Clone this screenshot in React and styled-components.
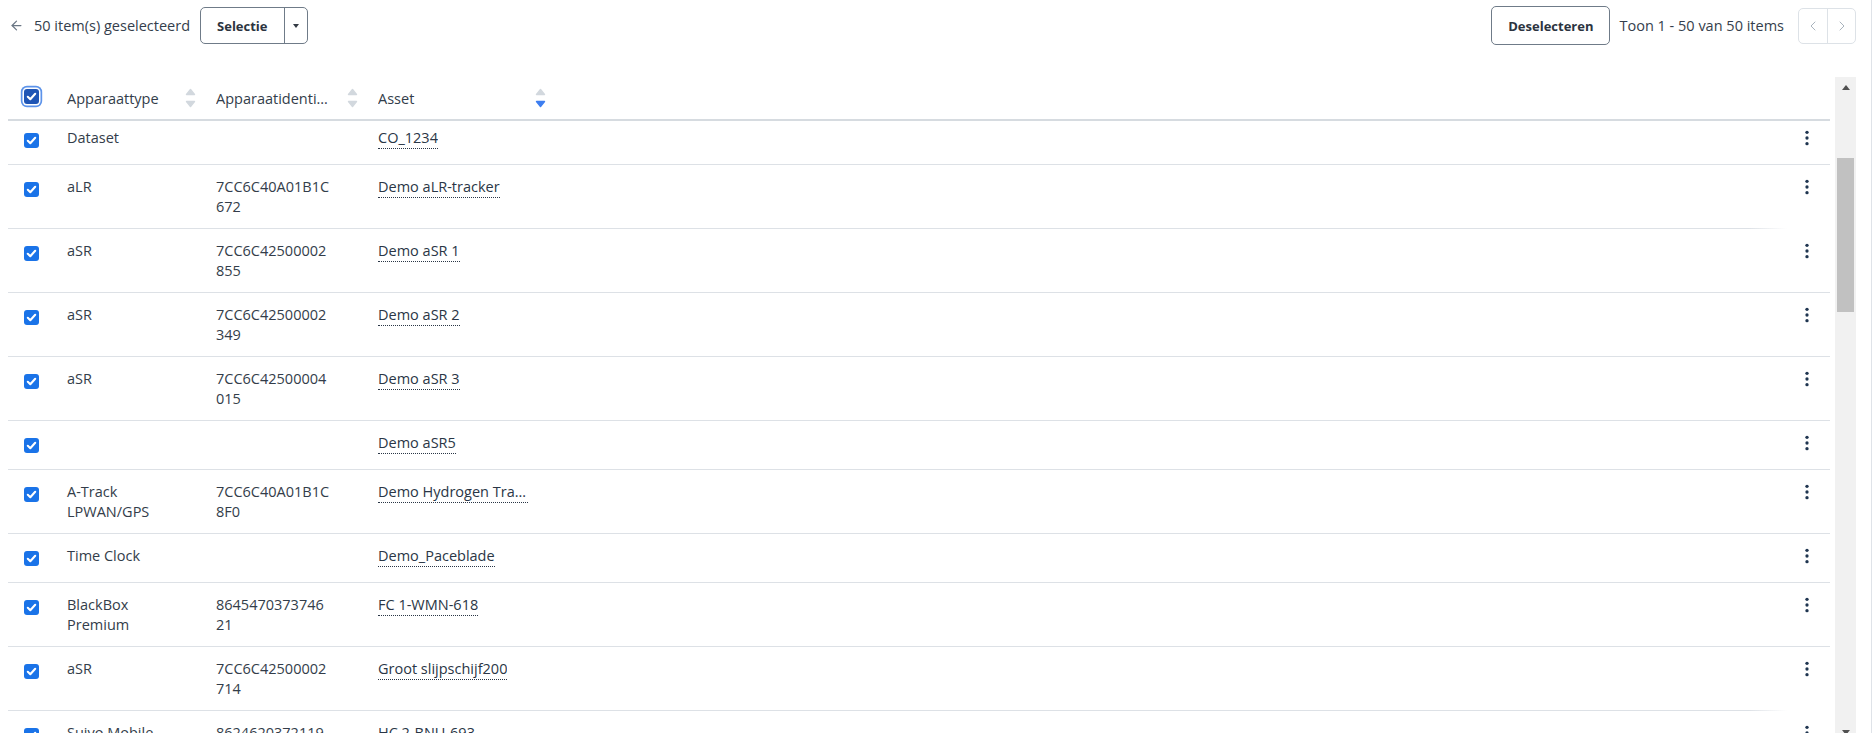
import React from 'react';
import styled, { createGlobalStyle, css } from 'styled-components';
import { ArrowLeft, ChevronLeft, ChevronRight } from 'lucide-react';

const GlobalStyle = createGlobalStyle`
  html, body { margin: 0; padding: 0; background: #fff; }
  body {
    font-family: "Open Sans", "Noto Sans", Arial, sans-serif;
    font-size: 14.5px;
    color: #333d4a;
    overflow: hidden;
  }
  * { box-sizing: border-box; }
`;

const Page = styled.div`
  width: 1872px;
  height: 733px;
  border-right: 1px solid #dfe3e8;
  padding: 7px 15px 0 8px;
  display: flex;
  flex-direction: column;
  overflow: hidden;
`;

const Toolbar = styled.div`
  display: flex;
  align-items: center;
  justify-content: space-between;
  height: 37px;
  flex-shrink: 0;
  padding-left: 1px;
`;

const Group = styled.div`
  display: flex;
  align-items: center;
  gap: ${(p) => p.$gap}px;
`;

const BackLink = styled.span`
  display: inline-flex;
  align-items: center;
  color: #6b7785;
`;

const ToolText = styled.span`
  color: #343e4c;
  white-space: nowrap;
`;

const SplitButton = styled.div`
  display: flex;
  height: 37px;
  border: 1px solid #6f7b88;
  border-radius: 5px;
  overflow: hidden;
`;

const ButtonText = styled.button`
  all: unset;
  display: flex;
  align-items: center;
  justify-content: center;
  height: 100%;
  padding: 0 16px;
  font-family: inherit;
  font-size: 13px;
  font-weight: 700;
  color: #2c3440;
  white-space: nowrap;
`;

const CaretPart = styled.span`
  display: flex;
  align-items: center;
  justify-content: center;
  width: 23px;
  border-left: 1px solid #6f7b88;
`;

const Caret = styled.span`
  width: 0;
  height: 0;
  border-left: 3.5px solid transparent;
  border-right: 3.5px solid transparent;
  border-top: 4px solid #333a44;
`;

const OutlineButton = styled.button`
  all: unset;
  display: flex;
  align-items: center;
  height: 37px;
  padding: 0 16px;
  border: 1px solid #6f7b88;
  border-radius: 5px;
  font-family: inherit;
  font-size: 13px;
  font-weight: 700;
  color: #2c3440;
`;

const Pager = styled.div`
  display: flex;
  height: 36px;
  margin-left: 5px;
  border: 1px solid #dde2e7;
  border-radius: 5px;
  overflow: hidden;
`;

const PagerButton = styled.span`
  display: flex;
  align-items: center;
  justify-content: center;
  width: 28px;
  color: #a9b3bd;
  ${(p) => p.$divided && css`border-left: 1px solid #dde2e7;`}
`;

const TableArea = styled.div`
  display: flex;
  margin-top: 33px;
  height: 666px;
  flex-shrink: 0;
`;

const Table = styled.div`
  flex: 1;
  margin-right: 5px;
  display: flex;
  flex-direction: column;
  min-width: 0;
`;

const gridCols = '47px 149px 162px 188px 1fr 46px';

const HeaderRow = styled.div`
  display: grid;
  grid-template-columns: ${gridCols};
  height: 44px;
  align-items: center;
  border-bottom: 2px solid #d6dbe0;
  flex-shrink: 0;
`;

const HeaderCell = styled.div`
  display: flex;
  align-items: center;
  padding: 0 8px 0 12px;
  min-width: 0;
`;

const HeaderLabel = styled.span`
  flex: 1;
  min-width: 0;
  overflow: hidden;
  white-space: nowrap;
  text-overflow: ellipsis;
  color: #333d4a;
`;

const SortIcon = styled.svg`
  flex-shrink: 0;
  margin-left: 12px;
`;

const CheckCell = styled.div`
  display: flex;
  justify-content: center;
  ${(p) => p.$body && css`padding-top: 5px;`}
`;

const Box = styled.span`
  display: inline-flex;
  align-items: center;
  justify-content: center;
  width: ${(p) => (p.$header ? 15 : 15)}px;
  height: ${(p) => (p.$header ? 15 : 15)}px;
  border-radius: 3px;
  background: ${(p) => (p.$header ? '#1f55b5' : '#1a73e8')};
  ${(p) =>
    p.$header &&
    css`
      margin-top: -3px;
      box-shadow: 0 0 0 1.5px #fff, 0 0 0 3.2px #5c93ea;
    `}
`;

const BodyRow = styled.div`
  display: grid;
  grid-template-columns: ${gridCols};
  align-items: start;
  line-height: 20px;
  border-bottom: 1px solid #dde1e6;
  padding: ${(p) => (p.$first ? 7 : 12)}px 0 11px;
  ${(p) =>
    p.$fade &&
    css`
      border-image: linear-gradient(
          to right,
          #dde1e6 calc(100% - 82px),
          rgba(221, 225, 230, 0) calc(100% - 44px)
        )
        1;
    `}
`;

const Cell = styled.div`
  padding: 0 ${(p) => p.$pr ?? 8}px 0 12px;
  min-width: 0;
  color: #333d4a;
`;

const Line = styled.span`
  display: block;
`;

const AssetLink = styled.a`
  display: inline-block;
  vertical-align: top;
  max-width: 150px;
  overflow: hidden;
  white-space: nowrap;
  text-overflow: ellipsis;
  color: #2a3646;
  text-decoration: none;
  border-bottom: 1px dotted #2a3646;
`;

const KebabButton = styled.span`
  display: flex;
  justify-content: center;
  width: 28px;
  height: 25px;
  padding-top: 2px;
  margin: 0 auto;
`;

const ScrollRail = styled.div`
  width: 21px;
  flex-shrink: 0;
  background: #f1f1f1;
  display: flex;
  flex-direction: column;
`;

const RailButton = styled.span`
  display: flex;
  align-items: center;
  justify-content: center;
  height: 21px;
  flex-shrink: 0;
`;

const RailArrow = styled.span`
  width: 0;
  height: 0;
  border-left: 4.5px solid transparent;
  border-right: 4.5px solid transparent;
  ${(p) =>
    p.$down
      ? css`border-top: 5px solid #505050;`
      : css`border-bottom: 5px solid #505050;`}
`;

const RailTrack = styled.div`
  flex: 1;
  padding: 60px 2px 0;
`;

const Thumb = styled.div`
  height: 154px;
  background: #c1c1c1;
`;

const CheckMark = () => (
  <svg width="11" height="11" viewBox="0 0 11 11">
    <polyline
      points="1.8,5.8 4.3,8.2 9.2,2.8"
      fill="none"
      stroke="#fff"
      strokeWidth="2.1"
      strokeLinecap="round"
      strokeLinejoin="round"
    />
  </svg>
);

const Sort = ({ active }) => (
  <SortIcon width="11" height="20" viewBox="0 0 11 20">
    <path
      d="M1.5 6.5 L5.5 1.5 L9.5 6.5 Z"
      fill="#d2d8de"
      stroke="#d2d8de"
      strokeWidth="1.4"
      strokeLinejoin="round"
    />
    <path
      d="M1.5 13.5 L9.5 13.5 L5.5 18.5 Z"
      fill={active ? '#3d7ef0' : '#d2d8de'}
      stroke={active ? '#3d7ef0' : '#d2d8de'}
      strokeWidth="1.4"
      strokeLinejoin="round"
    />
  </SortIcon>
);

const Kebab = () => (
  <svg width="4" height="16" viewBox="0 0 4 16">
    <circle cx="2" cy="2.3" r="1.65" fill="#1f3550" />
    <circle cx="2" cy="8" r="1.65" fill="#1f3550" />
    <circle cx="2" cy="13.7" r="1.65" fill="#1f3550" />
  </svg>
);

const rows = [
  { type: 'Dataset', id: '', asset: 'CO_1234' },
  { type: 'aLR', id: '7CC6C40A01B1C672', asset: 'Demo aLR-tracker', fade: true },
  { type: 'aSR', id: '7CC6C42500002855', asset: 'Demo aSR 1' },
  { type: 'aSR', id: '7CC6C42500002349', asset: 'Demo aSR 2' },
  { type: 'aSR', id: '7CC6C42500004015', asset: 'Demo aSR 3' },
  { type: '', id: '', asset: 'Demo aSR5' },
  { type: 'A-Track LPWAN/GPS', id: '7CC6C40A01B1C8F0', asset: 'Demo Hydrogen Tracker' },
  { type: 'Time Clock', id: '', asset: 'Demo_Paceblade' },
  { type: 'BlackBox Premium', id: '864547037374621', asset: 'FC 1-WMN-618' },
  { type: 'aSR', id: '7CC6C42500002714', asset: 'Groot slijpschijf200', fade: true },
  { type: 'Suivo Mobile', id: '8624620372119', asset: 'HC 2-BNU-693' },
];

const chunk = (s, n) => {
  const out = [];
  for (let i = 0; i < s.length; i += n) out.push(s.slice(i, i + n));
  return out;
};

export default function App() {
  return (
    <>
      <GlobalStyle />
      <Page>
        <Toolbar>
          <Group $gap={10}>
            <BackLink>
              <ArrowLeft size={15} strokeWidth={2} />
            </BackLink>
            <ToolText>50 item(s) geselecteerd</ToolText>
            <SplitButton>
              <ButtonText>Selectie</ButtonText>
              <CaretPart>
                <Caret />
              </CaretPart>
            </SplitButton>
          </Group>
          <Group $gap={9}>
            <OutlineButton>Deselecteren</OutlineButton>
            <ToolText>Toon 1 - 50 van 50 items</ToolText>
            <Pager>
              <PagerButton>
                <ChevronLeft size={16} strokeWidth={1.5} />
              </PagerButton>
              <PagerButton $divided>
                <ChevronRight size={16} strokeWidth={1.5} />
              </PagerButton>
            </Pager>
          </Group>
        </Toolbar>

        <TableArea>
          <Table>
            <HeaderRow>
              <CheckCell>
                <Box $header>
                  <CheckMark />
                </Box>
              </CheckCell>
              <HeaderCell>
                <HeaderLabel>Apparaattype</HeaderLabel>
                <Sort />
              </HeaderCell>
              <HeaderCell>
                <HeaderLabel>Apparaatidentificatie</HeaderLabel>
                <Sort />
              </HeaderCell>
              <HeaderCell>
                <HeaderLabel>Asset</HeaderLabel>
                <Sort active />
              </HeaderCell>
              <div />
              <div />
            </HeaderRow>

            {rows.map((r, i) => (
              <BodyRow key={i} $first={i === 0} $fade={r.fade}>
                <CheckCell $body>
                  <Box>
                    <CheckMark />
                  </Box>
                </CheckCell>
                <Cell $pr={30}>{r.type}</Cell>
                <Cell>
                  {chunk(r.id, 13).map((c, j) => (
                    <Line key={j}>{c}</Line>
                  ))}
                </Cell>
                <Cell>
                  <AssetLink href="#">{r.asset}</AssetLink>
                </Cell>
                <div />
                <div>
                  <KebabButton>
                    <Kebab />
                  </KebabButton>
                </div>
              </BodyRow>
            ))}
          </Table>

          <ScrollRail>
            <RailButton>
              <RailArrow />
            </RailButton>
            <RailTrack>
              <Thumb />
            </RailTrack>
            <RailButton>
              <RailArrow $down />
            </RailButton>
          </ScrollRail>
        </TableArea>
      </Page>
    </>
  );
}
